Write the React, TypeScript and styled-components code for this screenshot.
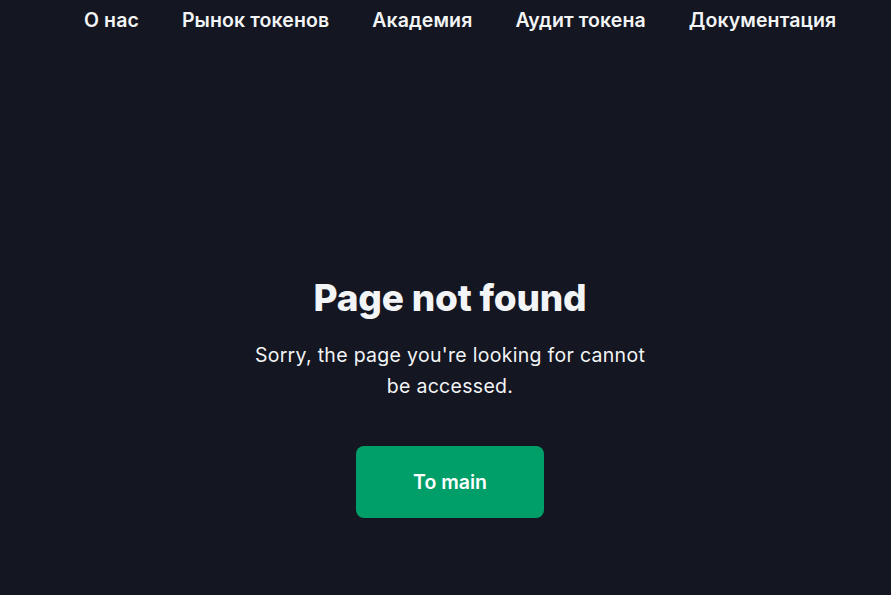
import React from "react";
import styled, { createGlobalStyle } from "styled-components";

const GlobalStyle = createGlobalStyle`
  html, body {
    margin: 0;
    padding: 0;
    background: #141621;
    font-family: Inter, "Noto Sans", sans-serif;
    color: #f2f4f5;
  }
`;

const Page = styled.div`
  min-height: 595px;
  display: flex;
  flex-direction: column;
  background: #141621;
  overflow: hidden;
`;

const Nav = styled.nav`
  display: flex;
  align-items: center;
  gap: 43px;
  height: 40px;
  padding-left: 84px;
`;

const NavLink = styled.a`
  font-size: 19.5px;
  font-weight: 600;
  letter-spacing: 0.1px;
  color: #f2f4f5;
  text-decoration: none;
  white-space: nowrap;
  cursor: pointer;
`;

const Main = styled.main`
  display: flex;
  flex-direction: column;
  align-items: center;
  padding: 236px 0 0 9px;
`;

const Title = styled.h1`
  margin: 0;
  font-size: 37px;
  font-weight: 800;
  line-height: 44px;
  letter-spacing: -0.2px;
  color: #f2f4f5;
`;

const Text = styled.p`
  margin: 20px 0 0;
  max-width: 410px;
  text-align: center;
  font-size: 19.5px;
  line-height: 31px;
  letter-spacing: 0.3px;
  color: #f2f4f5;
`;

const Button = styled.button`
  margin-top: 44px;
  width: 188px;
  height: 72px;
  border: none;
  border-radius: 8px;
  background: #009e69;
  color: #ffffff;
  font-family: inherit;
  font-size: 19.5px;
  font-weight: 600;
  cursor: pointer;
`;

const links = ["О нас", "Рынок токенов", "Академия", "Аудит токена", "Документация"];

export default function App() {
  return (
    <Page>
      <GlobalStyle />
      <Nav>
        {links.map((l) => (
          <NavLink key={l}>{l}</NavLink>
        ))}
      </Nav>
      <Main>
        <Title>Page not found</Title>
        <Text>Sorry, the page you're looking for cannot be accessed.</Text>
        <Button>To main</Button>
      </Main>
    </Page>
  );
}
